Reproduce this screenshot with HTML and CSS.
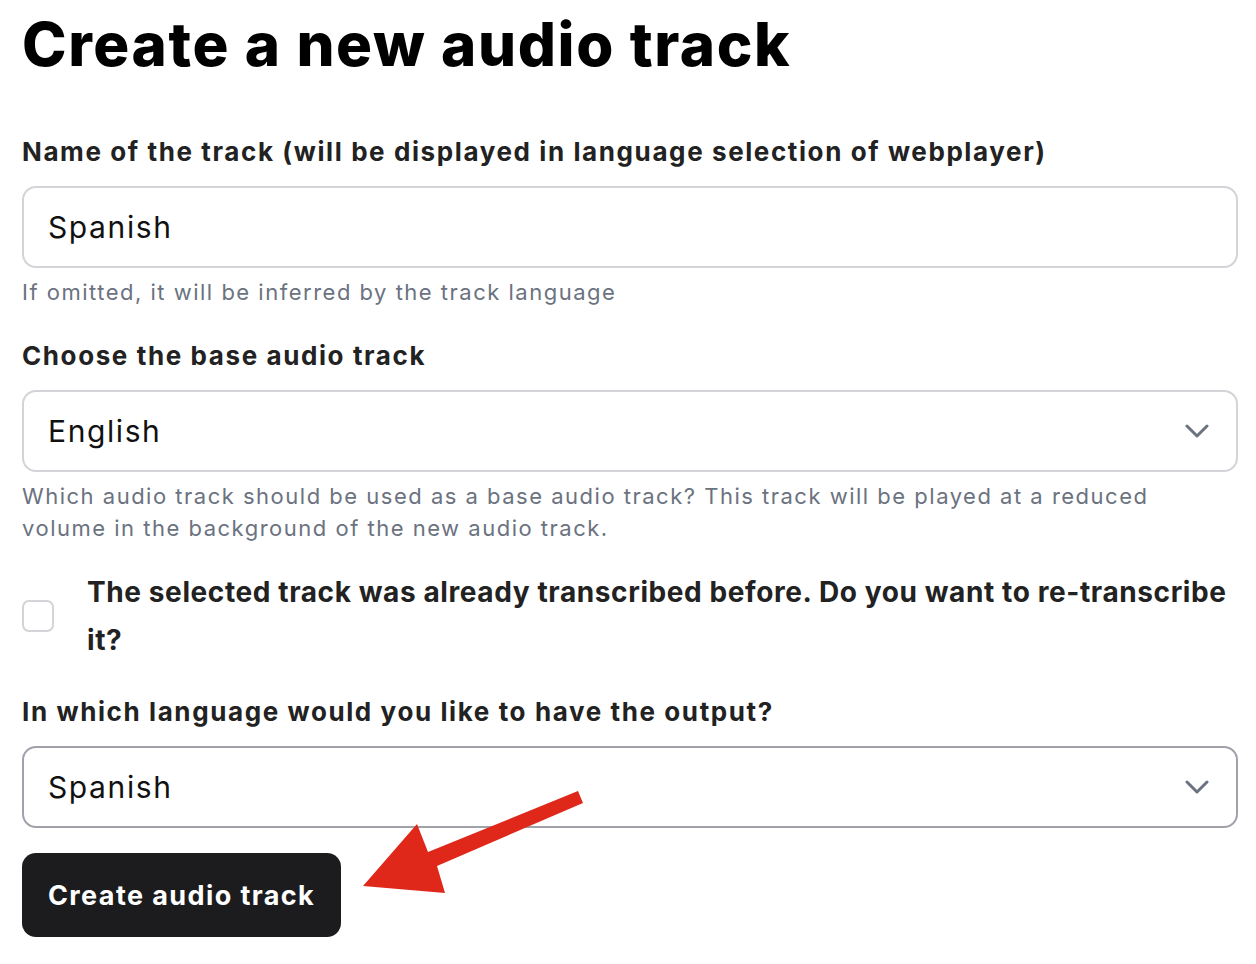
FILE: index.html
```html
<!doctype html>
<html lang="en">
  <head>
    <title>Create a new audio track</title>
    <link rel="stylesheet" href="styles.css">
  </head>
  <body>
    <div id="page">
      <h1 class="page-title">Create a new audio track</h1>

      <form class="track-form" onsubmit="return false">
        <div class="field">
          <label class="field-label" for="track-name">Name of the track (will be displayed in language selection of webplayer)</label>
          <input class="text-input" id="track-name" type="text" value="Spanish">
          <p class="help">If omitted, it will be inferred by the track language</p>
        </div>

        <div class="field">
          <label class="field-label" for="base-track">Choose the base audio track</label>
          <div class="select-wrap">
            <select class="select" id="base-track">
              <option selected>English</option>
              <option>Spanish</option>
            </select>
            <svg class="chevron" width="24" height="14" viewBox="0 0 24 14"><path d="M2 2l10 10L22 2" fill="none" stroke="#6b7280" stroke-width="3" stroke-linecap="round" stroke-linejoin="round"/></svg>
          </div>
          <p class="help">Which audio track should be used as a base audio track? This track will be played at a reduced volume in the background of the new audio track.</p>
        </div>

        <div class="check-row">
          <input class="checkbox" id="retranscribe" type="checkbox">
          <label class="check-label" for="retranscribe">The selected track was already transcribed before. Do you want to <span class="nowrap">re-transcribe</span> it?</label>
        </div>

        <div class="field">
          <label class="field-label" for="output-lang">In which language would you like to have the output?</label>
          <div class="select-wrap">
            <select class="select select-focus" id="output-lang">
              <option selected>Spanish</option>
              <option>English</option>
            </select>
            <svg class="chevron" width="24" height="14" viewBox="0 0 24 14"><path d="M2 2l10 10L22 2" fill="none" stroke="#6b7280" stroke-width="3" stroke-linecap="round" stroke-linejoin="round"/></svg>
          </div>
        </div>

        <button class="submit" type="submit">Create audio track</button>
      </form>

      <svg class="arrow" width="1256" height="964" viewBox="0 0 1256 964">
        <polygon points="578,791 583,803 437,866 445,893 363,886 417,824 428,852" fill="#e0281a"/>
      </svg>
    </div>
  </body>
</html>
```

FILE: styles.css
```css
body,
html {
  margin: 0;
  background-color: #fff;
  color: #222;
  font-family: Inter, "Noto Sans", sans-serif;
}

#page {
  position: relative;
  padding: 8px 18px 0 22px;
}

.page-title {
  margin: 0;
  font-size: 60px;
  line-height: 72px;
  font-weight: 800;
  color: #000;
  letter-spacing: 1.6px;
}

.track-form {
  display: flex;
  flex-direction: column;
  margin-top: 54px;
}

.field {
  display: flex;
  flex-direction: column;
}

.field-label {
  font-size: 26px;
  line-height: 36px;
  font-weight: 700;
  color: #222;
  letter-spacing: 1.6px;
  margin-bottom: 16px;
}

.text-input,
.select {
  box-sizing: border-box;
  width: 100%;
  height: 82px;
  padding: 0 24px;
  border: 2px solid #d4d4d8;
  border-radius: 14px;
  background: #fff;
  color: #111;
  font-family: Inter, "Noto Sans", sans-serif;
  font-size: 30px;
  letter-spacing: 1.6px;
  outline: none;
}

.select {
  appearance: none;
  -webkit-appearance: none;
}

.select-focus {
  border-color: #a1a1aa;
}

.select-wrap {
  position: relative;
}

.chevron {
  position: absolute;
  right: 29px;
  top: 34px;
  pointer-events: none;
}

.help {
  margin: 8px 0 0;
  font-size: 22px;
  line-height: 32px;
  color: #6b7280;
  letter-spacing: 1.5px;
}

.field + .field,
.check-row + .field {
  margin-top: 30px;
}

.check-row {
  display: flex;
  align-items: center;
  gap: 33px;
  margin-top: 24px;
}

.checkbox {
  appearance: none;
  -webkit-appearance: none;
  flex: none;
  width: 32px;
  height: 32px;
  margin: 0;
  border: 2px solid #d4d4d8;
  border-radius: 7px;
  background: #fff;
}

.check-label {
  font-size: 28px;
  line-height: 48px;
  font-weight: 700;
  color: #222;
  letter-spacing: 0.6px;
}

.nowrap {
  white-space: nowrap;
}

.submit {
  align-self: flex-start;
  margin-top: 25px;
  height: 84px;
  padding: 0 26px;
  border: none;
  border-radius: 14px;
  background-color: #1c1c1e;
  color: #fff;
  font-family: Inter, "Noto Sans", sans-serif;
  font-size: 27px;
  font-weight: 700;
  letter-spacing: 1.4px;
  cursor: pointer;
}

.arrow {
  position: absolute;
  left: 0;
  top: 0;
  pointer-events: none;
}
```
